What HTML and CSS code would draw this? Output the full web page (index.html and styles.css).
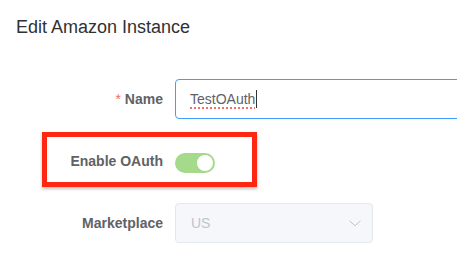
FILE: index.html
```html
<!DOCTYPE html>
<html>
<head>
<meta charset="utf-8">
<link rel="stylesheet" href="styles.css">
</head>
<body>
<div class="page">
  <h1 class="title">Edit Amazon Instance</h1>
  <div class="form">
    <div class="form-item">
      <label class="label"><span class="req">*</span>Name</label>
      <div class="input"><span class="typed">TestOAuth</span><span class="caret"></span></div>
    </div>
    <div class="form-item">
      <label class="label">Enable OAuth</label>
      <div class="switch"><span class="knob"></span></div>
    </div>
    <div class="form-item">
      <label class="label">Marketplace</label>
      <div class="select">
        <span class="placeholder">US</span>
        <svg class="chevron" width="12" height="7" viewBox="0 0 12 7"><path d="M0.5 0.8 L6 5.8 L11.5 0.8" fill="none" stroke="#c0c4cc" stroke-width="1"/></svg>
      </div>
    </div>
    <div class="highlight"></div>
  </div>
</div>
</body>
</html>
```

FILE: styles.css
```css
html, body {
  margin: 0;
  padding: 0;
  background: #fff;
  overflow: hidden;
}
.page {
  width: 457px;
  height: 267px;
  font-family: "Liberation Sans", Arial, sans-serif;
  overflow: hidden;
}
.title {
  margin: 0;
  padding: 15px 0 0 16px;
  font-size: 18px;
  line-height: 24px;
  font-weight: normal;
  color: #303133;
}
.form {
  position: relative;
  margin-top: 40px;
}
.form-item {
  display: flex;
  height: 40px;
  margin-bottom: 22px;
}
.label {
  width: 175px;
  flex: none;
  box-sizing: border-box;
  padding-right: 12px;
  text-align: right;
  font-size: 14px;
  font-weight: bold;
  line-height: 40px;
  color: #606266;
}
.req {
  color: #f56c6c;
  margin-right: 4px;
  font-weight: normal;
}
.input {
  flex: none;
  width: 320px;
  height: 40px;
  box-sizing: border-box;
  border: 1px solid #409eff;
  border-radius: 4px;
  padding: 0 14px;
  display: flex;
  align-items: center;
  font-size: 14px;
  color: #606266;
}
.typed {
  text-decoration: underline dotted #f56c6c;
  text-decoration-thickness: 2px;
  text-underline-offset: 3px;
}
.caret {
  display: inline-block;
  width: 1px;
  height: 18px;
  background: #303133;
  margin-left: 1px;
}
.switch {
  position: relative;
  width: 40px;
  height: 20px;
  margin-top: 12px;
  border-radius: 10px;
  background: #a4da89;
}
.knob {
  position: absolute;
  top: 2px;
  right: 2px;
  width: 16px;
  height: 16px;
  border-radius: 50%;
  background: #fff;
}
.select {
  width: 198px;
  height: 40px;
  box-sizing: border-box;
  border: 1px solid #e4e7ed;
  border-radius: 4px;
  background: #f5f7fa;
  padding: 0 11px 0 15px;
  display: flex;
  align-items: center;
  justify-content: space-between;
  font-size: 14px;
}
.placeholder {
  color: #c0c4cc;
}
.highlight {
  position: absolute;
  left: 42px;
  top: 53px;
  width: 215px;
  height: 55px;
  box-sizing: border-box;
  border: 5px solid #fe2712;
  box-shadow: 0 2px 3px rgba(0, 0, 0, 0.25);
}
```
